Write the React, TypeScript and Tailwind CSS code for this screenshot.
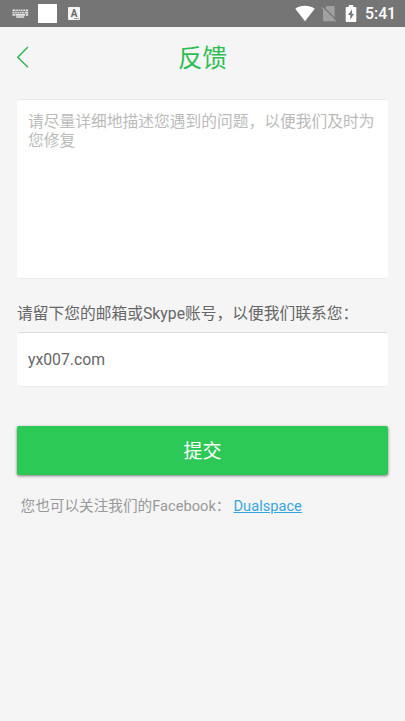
import { useState } from 'react';

function StatusBar() {
  return (
    <div className="flex h-[27px] items-center bg-[#757575] text-white">
      {/* Notifications */}
      <svg className="ml-[12px]" width="17" height="10" viewBox="0 0 17 10" fill="#e6e6e6">
        <path d="M0.5 0.5h3v1.6h-3zM4.2 0.5h1.7v1.6H4.2zM6.6 0.5h1.7v1.6H6.6zM9 0.5h1.7v1.6H9zM11.4 0.5h1.7v1.6h-1.7zM13.8 0.5h2.4v1.6h-2.4z" />
        <path d="M0.5 2.8h1.8v1.6H0.5zM3 2.8h1.7v1.6H3zM5.4 2.8h1.7v1.6H5.4zM7.8 2.8h1.7v1.6H7.8zM10.2 2.8h1.7v1.6h-1.7zM12.6 2.8h3.6v1.6h-3.6z" />
        <path d="M0.5 5.1h2.4v1.6H0.5zM13.8 5.1h2.4v1.6h-2.4zM3.5 5.1h9.6v1.6H3.5zM4.2 7.2h8v1.5h-8z" />
      </svg>
      <div className="ml-[9px] h-[19px] w-[19px] bg-white" />
      <div className="relative ml-[11px] flex h-[13px] w-[12px] items-center justify-center rounded-[1px] bg-[#f5f5f5] font-bold text-[10px] leading-none text-[#666]">
        A
        <span className="absolute bottom-[1px] right-[1px] h-px w-[5px] bg-[#999]" />
      </div>

      {/* System icons */}
      <svg className="ml-auto" width="20" height="17" viewBox="0 0 20 17" fill="#fff">
        <path d="M0.3 3.7C5.9-.1 14.1-.1 19.7 3.7L10 16.3z" />
      </svg>
      <svg className="ml-[6px]" width="16" height="17" viewBox="0 0 16 17">
        <path d="M6 1h6.7a1 1 0 0 1 1 1v13.3a1 1 0 0 1-1 1H3a1 1 0 0 1-1-1V5z" fill="#a0a0a0" />
        <path d="M1.7 1.5l14 14" stroke="#757575" strokeWidth="1.6" />
        <path d="M.8 2.3l14 14" stroke="#a0a0a0" strokeWidth="1.2" />
      </svg>
      <svg className="ml-[8px]" width="12" height="17" viewBox="0 0 12 17">
        <path d="M3.8 0h4.4v2h2.3a.8.8 0 0 1 .8.8v13.4a.8.8 0 0 1-.8.8h-9a.8.8 0 0 1-.8-.8V2.8a.8.8 0 0 1 .8-.8h2.3z" fill="#fff" />
        <path d="M7 4.2L3 10h2.3v4.7L9 8.7H6.8z" fill="#757575" />
      </svg>
      <span className="ml-[8px] mr-[10px] w-[30px] whitespace-nowrap pt-px text-[15.8px] font-medium leading-none">5:41</span>
    </div>
  );
}

export default function App() {
  const [message, setMessage] = useState('');
  const [contact, setContact] = useState('yx007.com');

  return (
    <div className="h-[721px] w-[405px] overflow-hidden bg-[#f5f5f5] font-[Roboto,'Noto_Sans_CJK_SC',sans-serif]">
      <StatusBar />

      <header className="grid h-[62px] grid-cols-[60px_1fr_60px] items-center">
        <button type="button" aria-label="返回" className="pb-[2px] pl-[16px]">
          <svg width="13" height="22" viewBox="0 0 13 22" fill="none" stroke="#35b555" strokeWidth="1.5">
            <path d="M11.9 1L1.8 11.2 11.9 21.3" />
          </svg>
        </button>
        <h1 className="pt-[2px] text-center text-[24.6px] font-normal leading-none text-[#2fbd54]">反馈</h1>
      </header>

      <main className="px-[17px] pt-[10px]">
        <textarea
          value={message}
          onChange={(e) => setMessage(e.target.value)}
          placeholder="请尽量详细地描述您遇到的问题，以便我们及时为您修复"
          className="block h-[180px] w-full resize-none rounded-[4px] border border-x-white border-y-[#ebebeb] bg-white px-[10px] pt-[12px] text-[15.75px] leading-[19px] text-[#666] outline-none placeholder:text-[#bbb]"
        />

        <label htmlFor="contact" className="mt-[25px] block whitespace-nowrap text-[15.75px] leading-[20px] text-[#666]">
          请留下您的邮箱或Skype账号，以便我们联系您：
        </label>
        <input
          id="contact"
          value={contact}
          onChange={(e) => setContact(e.target.value)}
          className="mt-[8px] block h-[55px] w-full rounded-[4px] border border-x-white border-b-[#ebebeb] border-t-[#dcdcdc] bg-white px-[10px] text-[15.75px] text-[#666] outline-none"
        />

        <button
          type="button"
          className="mt-[39px] flex h-[49px] w-full items-center justify-center rounded-[2px] bg-[#2dc956] pt-[3px] text-[19px] text-white shadow-[0_1px_3px_rgba(0,0,0,0.5)]"
        >
          提交
        </button>

        <p className="mt-[21px] flex gap-[3px] whitespace-nowrap pl-[3.5px] text-[14.65px] leading-[20px] text-[#999]">
          您也可以关注我们的Facebook：
          <a href="#" className="text-[#35a5e0] underline">Dualspace</a>
        </p>
      </main>
    </div>
  );
}
